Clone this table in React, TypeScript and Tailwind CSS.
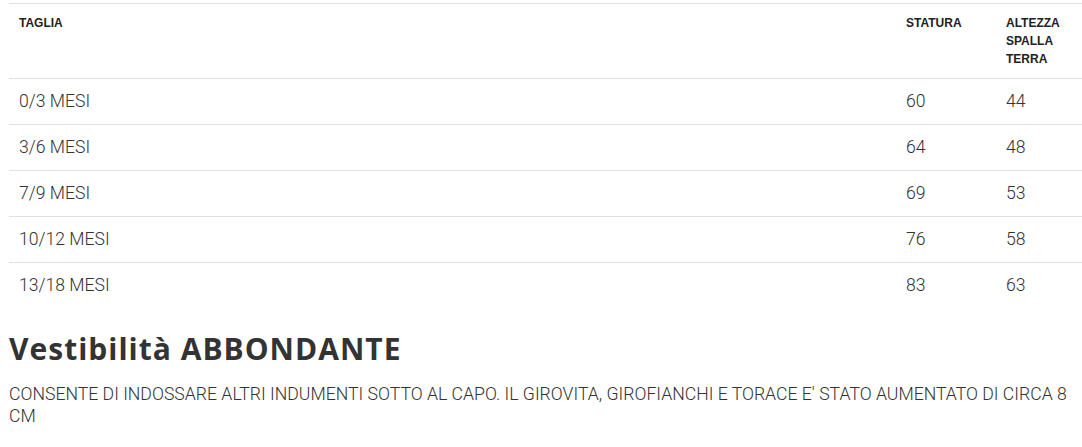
import React from "react";

const rows = [
  ["0/3 MESI", "60", "44"],
  ["3/6 MESI", "64", "48"],
  ["7/9 MESI", "69", "53"],
  ["10/12 MESI", "76", "58"],
  ["13/18 MESI", "83", "63"],
];

const th = "text-left align-top px-[10px] pt-[10px] pb-[10px] text-[12px] leading-[18px] font-bold text-[#222] uppercase";

export default function App() {
  return (
    <div className="bg-white w-[1082px] h-[447px] overflow-hidden pl-[9px] pt-[3px] text-[#333]" style={{ fontFamily: "Roboto, 'Liberation Sans', sans-serif" }}>
      <table className="w-[1073px] border-collapse table-fixed">
        <colgroup>
          <col className="w-[887px]" />
          <col className="w-[100px]" />
          <col className="w-[86px]" />
        </colgroup>
        <thead>
          <tr className="border-t border-[#e1e1e1]" style={{ fontFamily: "'Liberation Sans', Arial, sans-serif" }}>
            <th className={th}>Taglia</th>
            <th className={th}>Statura</th>
            <th className={th}>Altezza spalla terra</th>
          </tr>
        </thead>
        <tbody>
          {rows.map((r, i) => (
            <tr key={i} className="border-t border-[#e1e1e1]">
              {r.map((c, j) => (
                <td key={j} className="px-[10px] py-[12px] text-[17.6px] leading-[21px] font-light text-[#333]">{c}</td>
              ))}
            </tr>
          ))}
        </tbody>
      </table>
      <h2 className="mt-[23px] text-[30px] leading-[36px] font-bold text-[#333] tracking-[1px]" style={{ fontFamily: "'Open Sans', 'Liberation Sans', sans-serif" }}>
        Vestibilità ABBONDANTE
      </h2>
      <p className="mt-[16px] w-[1073px] text-[17.65px] leading-[22px] font-light text-[#333]">
        CONSENTE DI INDOSSARE ALTRI INDUMENTI SOTTO AL CAPO. IL GIROVITA, GIROFIANCHI E TORACE E' STATO AUMENTATO DI CIRCA 8 CM
      </p>
    </div>
  );
}
